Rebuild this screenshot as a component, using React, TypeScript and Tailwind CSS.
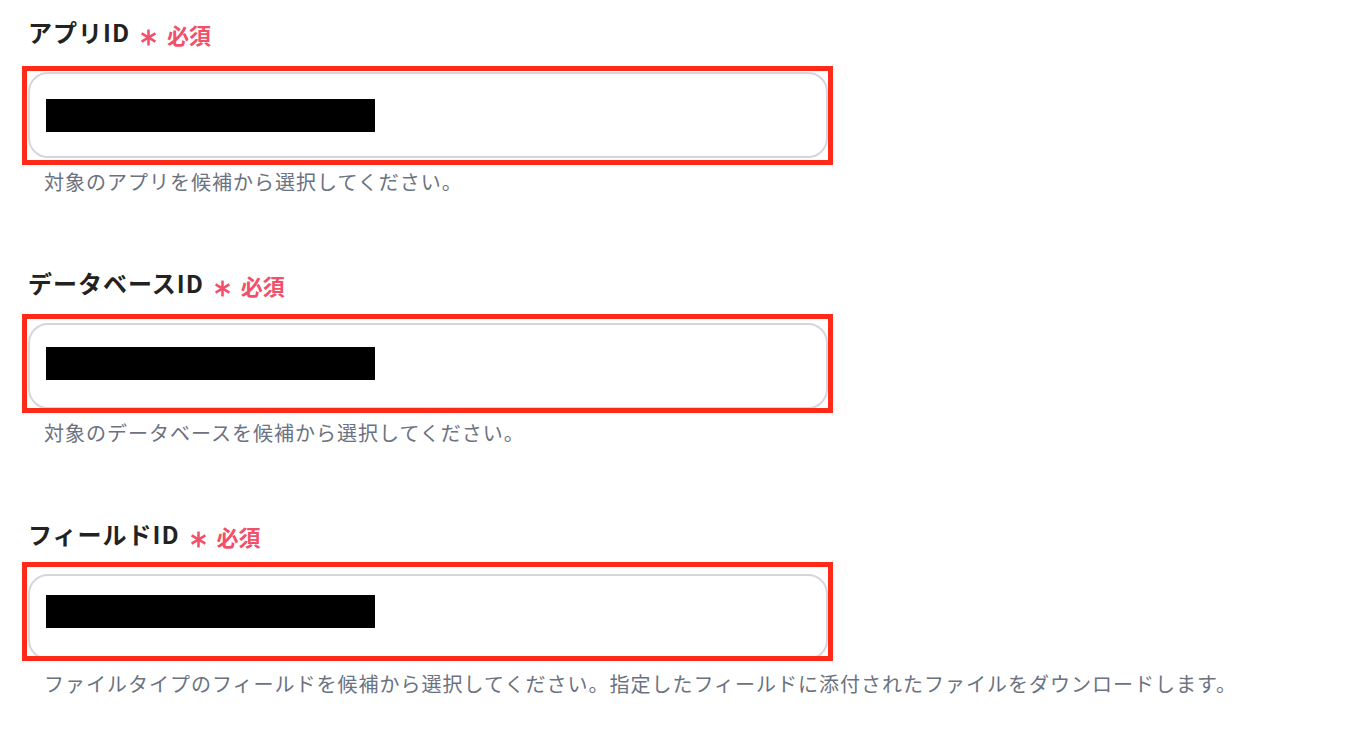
import React from 'react'

// 入力欄の上に赤枠と黒塗りの注釈が重なっている
const fields = [
  {
    label: 'アプリID',
    help: '対象のアプリを候補から選択してください。',
    overlay: 'top-[-6px]',
  },
  {
    label: 'データベースID',
    help: '対象のデータベースを候補から選択してください。',
    overlay: 'top-[-9px]',
  },
  {
    label: 'フィールドID',
    help: 'ファイルタイプのフィールドを候補から選択してください。指定したフィールドに添付されたファイルをダウンロードします。',
    overlay: 'top-[-12px]',
  },
]

function Asterisk() {
  return (
    <svg width="17" height="17" viewBox="0 0 16 16" className="translate-y-[5px]" aria-hidden>
      <g stroke="#f2506a" strokeWidth="2.4" strokeLinecap="butt">
        <line x1="8" y1="0.5" x2="8" y2="15.5" />
        <line x1="1.5" y1="4.2" x2="14.5" y2="11.8" />
        <line x1="1.5" y1="11.8" x2="14.5" y2="4.2" />
      </g>
    </svg>
  )
}

export default function App() {
  return (
    <div
      className="min-h-screen bg-white pl-[28px] pt-[14px]"
      style={{ fontFamily: '"Noto Sans CJK JP", "Noto Sans", sans-serif' }}
    >
      <div className="flex flex-col gap-[69px]">
        {fields.map((f) => (
          <section key={f.label} className="flex flex-col">
            {/* Label */}
            <div className="flex h-[36px] items-center">
              <span className="text-[24px] font-bold leading-[36px] tracking-[1px] text-[#222222]">
                {f.label}
              </span>
              <span className="ml-[10px]">
                <Asterisk />
              </span>
              <span className="ml-[10px] translate-y-[2px] text-[22px] font-bold leading-[36px] text-[#f2506a]">
                必須
              </span>
            </div>

            {/* Input */}
            <div className="relative mt-[22px] h-[86px] w-[800px]">
              <div className="h-full w-full rounded-[20px] border-2 border-[#d3d6dc] bg-white" />
              <div
                className={`pointer-events-none absolute left-[-6px] h-[99px] w-[811px] border-[5px] border-[#ff2a17] ${f.overlay}`}
              >
                <div className="absolute left-[19px] top-[28px] h-[33px] w-[329px] bg-black" />
              </div>
            </div>

            {/* Help */}
            <p className="ml-4 mt-[10px] text-[20px] leading-[28px] tracking-[1px] text-[#6b7280]">
              {f.help}
            </p>
          </section>
        ))}
      </div>
    </div>
  )
}
